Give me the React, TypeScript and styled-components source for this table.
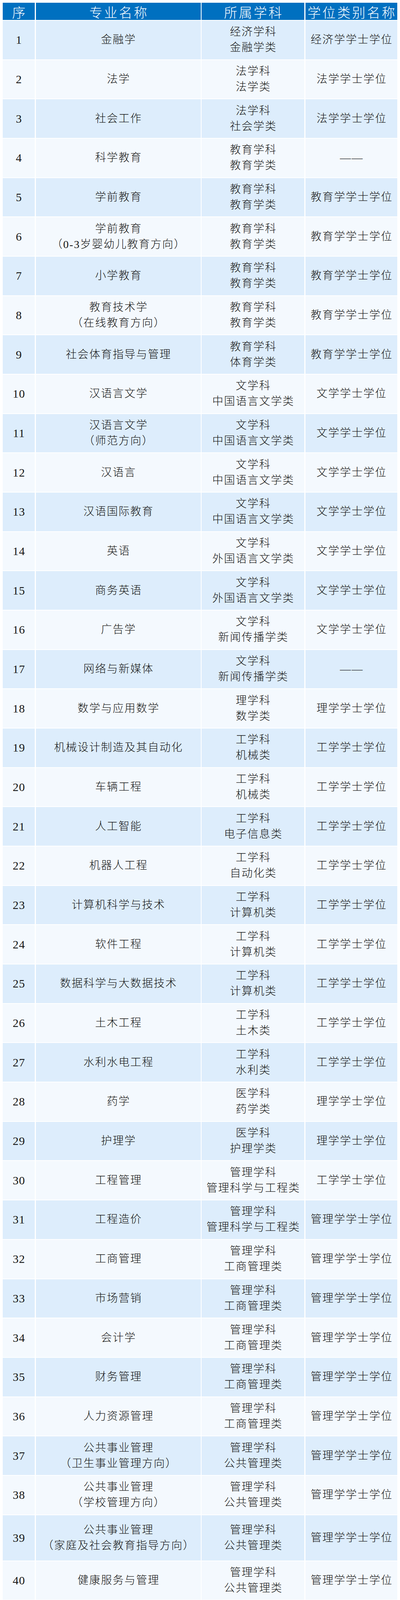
import styled, { createGlobalStyle } from 'styled-components'

type Major = {
  name: string[]
  subject: [string, string]
  degree: string
  height?: number
}

const majors: Major[] = [
  { name: ['金融学'], subject: ['经济学科', '金融学类'], degree: '经济学学士学位' },
  { name: ['法学'], subject: ['法学科', '法学类'], degree: '法学学士学位' },
  { name: ['社会工作'], subject: ['法学科', '社会学类'], degree: '法学学士学位' },
  { name: ['科学教育'], subject: ['教育学科', '教育学类'], degree: '——' },
  { name: ['学前教育'], subject: ['教育学科', '教育学类'], degree: '教育学学士学位' },
  { name: ['学前教育', '（0-3岁婴幼儿教育方向）'], subject: ['教育学科', '教育学类'], degree: '教育学学士学位' },
  { name: ['小学教育'], subject: ['教育学科', '教育学类'], degree: '教育学学士学位' },
  { name: ['教育技术学', '（在线教育方向）'], subject: ['教育学科', '教育学类'], degree: '教育学学士学位' },
  { name: ['社会体育指导与管理'], subject: ['教育学科', '体育学类'], degree: '教育学学士学位' },
  { name: ['汉语言文学'], subject: ['文学科', '中国语言文学类'], degree: '文学学士学位' },
  { name: ['汉语言文学', '（师范方向）'], subject: ['文学科', '中国语言文学类'], degree: '文学学士学位' },
  { name: ['汉语言'], subject: ['文学科', '中国语言文学类'], degree: '文学学士学位' },
  { name: ['汉语国际教育'], subject: ['文学科', '中国语言文学类'], degree: '文学学士学位' },
  { name: ['英语'], subject: ['文学科', '外国语言文学类'], degree: '文学学士学位' },
  { name: ['商务英语'], subject: ['文学科', '外国语言文学类'], degree: '文学学士学位' },
  { name: ['广告学'], subject: ['文学科', '新闻传播学类'], degree: '文学学士学位' },
  { name: ['网络与新媒体'], subject: ['文学科', '新闻传播学类'], degree: '——' },
  { name: ['数学与应用数学'], subject: ['理学科', '数学类'], degree: '理学学士学位' },
  { name: ['机械设计制造及其自动化'], subject: ['工学科', '机械类'], degree: '工学学士学位' },
  { name: ['车辆工程'], subject: ['工学科', '机械类'], degree: '工学学士学位' },
  { name: ['人工智能'], subject: ['工学科', '电子信息类'], degree: '工学学士学位' },
  { name: ['机器人工程'], subject: ['工学科', '自动化类'], degree: '工学学士学位' },
  { name: ['计算机科学与技术'], subject: ['工学科', '计算机类'], degree: '工学学士学位' },
  { name: ['软件工程'], subject: ['工学科', '计算机类'], degree: '工学学士学位' },
  { name: ['数据科学与大数据技术'], subject: ['工学科', '计算机类'], degree: '工学学士学位' },
  { name: ['土木工程'], subject: ['工学科', '土木类'], degree: '工学学士学位' },
  { name: ['水利水电工程'], subject: ['工学科', '水利类'], degree: '工学学士学位' },
  { name: ['药学'], subject: ['医学科', '药学类'], degree: '理学学士学位' },
  { name: ['护理学'], subject: ['医学科', '护理学类'], degree: '理学学士学位' },
  { name: ['工程管理'], subject: ['管理学科', '管理科学与工程类'], degree: '工学学士学位' },
  { name: ['工程造价'], subject: ['管理学科', '管理科学与工程类'], degree: '管理学学士学位' },
  { name: ['工商管理'], subject: ['管理学科', '工商管理类'], degree: '管理学学士学位' },
  { name: ['市场营销'], subject: ['管理学科', '工商管理类'], degree: '管理学学士学位' },
  { name: ['会计学'], subject: ['管理学科', '工商管理类'], degree: '管理学学士学位' },
  { name: ['财务管理'], subject: ['管理学科', '工商管理类'], degree: '管理学学士学位' },
  { name: ['人力资源管理'], subject: ['管理学科', '工商管理类'], degree: '管理学学士学位' },
  { name: ['公共事业管理', '（卫生事业管理方向）'], subject: ['管理学科', '公共管理类'], degree: '管理学学士学位' },
  { name: ['公共事业管理', '（学校管理方向）'], subject: ['管理学科', '公共管理类'], degree: '管理学学士学位' },
  { name: ['公共事业管理', '（家庭及社会教育指导方向）'], subject: ['管理学科', '公共管理类'], degree: '管理学学士学位', height: 116 },
  { name: ['健康服务与管理'], subject: ['管理学科', '公共管理类'], degree: '管理学学士学位' },
  { name: ['行政管理'], subject: ['管理学科', '公共管理类'], degree: '管理学学士学位' },
  { name: ['物流管理'], subject: ['管理学科', '物流管理与工程类'], degree: '管理学学士学位' },
  { name: ['电子商务'], subject: ['管理学科', '电子商务类'], degree: '管理学学士学位' },
  { name: ['会展经济与管理'], subject: ['管理学科', '旅游管理类'], degree: '管理学学士学位' },
  { name: ['书法学'], subject: ['艺术学科', '美术学类'], degree: '艺术学学士学位' },
  { name: ['中国画'], subject: ['艺术学科', '美术学类'], degree: '——', height: 78 },
]

const GlobalStyle = createGlobalStyle`
  html, body {
    margin: 0;
    padding: 0;
    background: #ffffff;
  }

  body {
    font-family: "Liberation Serif", "Noto Sans CJK SC", serif;
    color: #151515;
  }
`

const Page = styled.div`
  padding: 7px 0 0 7px;
  width: 1010px;
`

const Table = styled.div`
  display: flex;
  flex-direction: column;
  gap: 2px;
`

const Row = styled.div<{ $height: number }>`
  display: grid;
  grid-template-columns: 82px 422px 263px 1fr;
  column-gap: 2.5px;
  height: ${(p) => p.$height}px;
`

const HeadCell = styled.div`
  background: #0070c0;
  color: #ffffff;
  display: flex;
  align-items: center;
  justify-content: center;
  padding: 3px 0 0 4px;
  font-family: "Noto Sans CJK SC", sans-serif;
  font-size: 34px;
  font-weight: 300;
  letter-spacing: 4px;
  line-height: 40px;
  white-space: nowrap;
`

const Cell = styled.div<{ $alt: boolean }>`
  background: ${(p) => (p.$alt ? '#f4f9fe' : '#ddedfc')};
  display: flex;
  flex-direction: column;
  align-items: center;
  justify-content: center;
  padding-left: 2px;
  text-align: center;
  font-size: 28px;
  font-weight: 300;
  line-height: 40px;
  letter-spacing: 2px;
  white-space: nowrap;
`

const NumCell = styled(Cell)`
  font-size: 30px;
  font-weight: 400;
  letter-spacing: 1px;
  padding-left: 1px;
`

const Line = styled.span`
  display: block;
`

export default function App() {
  return (
    <>
      <GlobalStyle />
      <Page>
        <Table>
          <Row $height={44}>
            <HeadCell>序</HeadCell>
            <HeadCell>专业名称</HeadCell>
            <HeadCell>所属学科</HeadCell>
            <HeadCell>学位类别名称</HeadCell>
          </Row>
          {majors.map((m, i) => {
            const alt = i % 2 === 1
            return (
              <Row key={i} $height={m.height ?? 98.68}>
                <NumCell $alt={alt}>{i + 1}</NumCell>
                <Cell $alt={alt}>
                  {m.name.map((n) => (
                    <Line key={n}>{n}</Line>
                  ))}
                </Cell>
                <Cell $alt={alt}>
                  <Line>{m.subject[0]}</Line>
                  <Line>{m.subject[1]}</Line>
                </Cell>
                <Cell $alt={alt}>{m.degree}</Cell>
              </Row>
            )
          })}
        </Table>
      </Page>
    </>
  )
}
